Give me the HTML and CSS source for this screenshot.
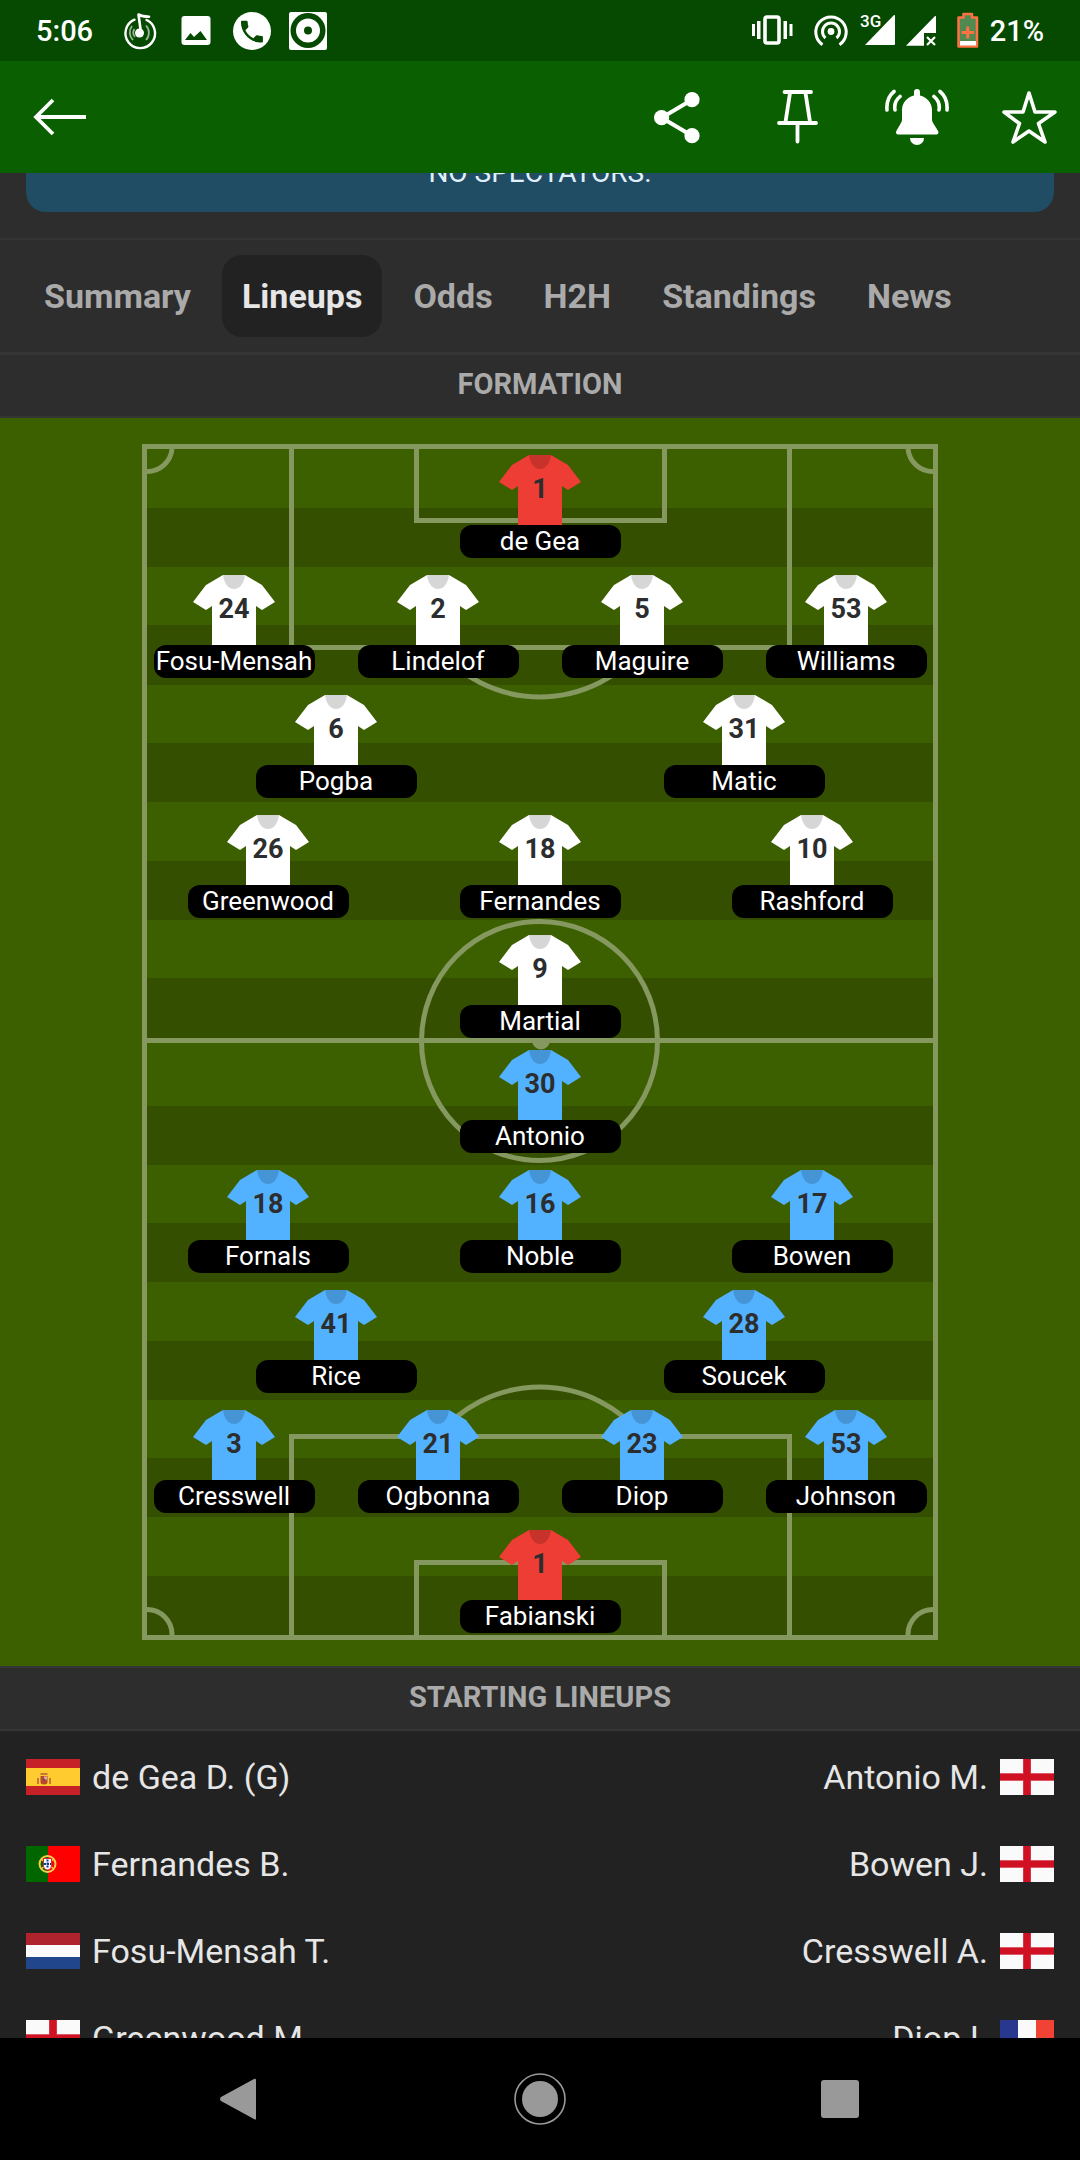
FILE: index.html
```html
<!DOCTYPE html>
<html lang="en">
<head>
<meta charset="utf-8">
<meta name="viewport" content="width=device-width, initial-scale=1">
<title>Lineups</title>
<link rel="stylesheet" href="styles.css">
</head>
<body>
<svg class="defs" aria-hidden="true">
  <symbol id="jersey" viewBox="0 0 82 70">
    <path fill="currentColor" d="M30 0H52L69 10L82 27L69 35L63 31V70H19V31L13 35L0 27L13 10Z"/>
    <path fill="#000" fill-opacity=".16" d="M30 0H52C51 8 47 14 41 14S31 8 30 0Z"/>
  </symbol>
  <symbol id="england" viewBox="0 0 54 36">
    <path fill="#fafafa" d="M0 0H54V36H0Z"/>
    <path fill="#dd5a69" d="M23 0H31V36H23ZM0 14H54V22H0Z"/>
    <path fill="#d01124" d="M23.500 0H30.500V36H23.500ZM0 15H54V21H0Z"/>
  </symbol>
  <symbol id="spain" viewBox="0 0 54 36">
    <path fill="#c62127" d="M0 0H54V36H0Z"/>
    <path fill="#ffcb2f" d="M0 9H54V27H0Z"/>
    <path fill="#c8763a" d="M11 19h2v6h-2zM23 19h2v6h-2zM14.500 14h7v2h-7z"/>
    <path fill="#b84a2a" d="M14.500 17h7v6a3.500 2.500 0 0 1-7 0z"/>
    <path fill="#d9b5b0" d="M18 17.500h3v3h-3z"/>
    <path fill="#7a4a6a" d="M17 19.500h2v2.500h-2z"/>
  </symbol>
  <symbol id="portugal" viewBox="0 0 54 36">
    <path fill="#f00" d="M0 0H54V36H0Z"/>
    <path fill="#060" d="M0 0H22V36H0Z"/>
    <circle cx="21.500" cy="18" r="8" fill="none" stroke="#f5cf4a" stroke-width="2"/>
    <path stroke="#f5cf4a" stroke-width="1.500" d="M15 13L28 23M15 23L28 13"/>
    <path fill="#fff" stroke="#d22" d="M17.500 12.500h8v7a4 4.500 0 0 1-8 0z"/>
    <path stroke="#0a3a9a" stroke-width="2" stroke-dasharray="2 1" d="M21.500 13.500V22M18 18H25"/>
  </symbol>
  <symbol id="netherlands" viewBox="0 0 54 36">
    <path fill="#ae232d" d="M0 0H54V12H0Z"/>
    <path fill="#fafafa" d="M0 12H54V24H0Z"/>
    <path fill="#21468b" d="M0 24H54V36H0Z"/>
  </symbol>
  <symbol id="france" viewBox="0 0 54 36">
    <path fill="#28388f" d="M0 0H18V36H0Z"/>
    <path fill="#fafafa" d="M18 0H36V36H18Z"/>
    <path fill="#f04336" d="M36 0H54V36H36Z"/>
  </symbol>
</svg>

<div class="status">
  <span class="time">5:06</span>
  <div class="status-left">
    <svg width="38" height="38" viewBox="0 0 38 38" fill="none" stroke="#fff">
      <path stroke-width="2.400" stroke-linecap="round" d="M13.500 7.700A14.800 14.800 0 1 0 25.500 7.900"/>
      <path stroke-width="2.600" stroke-linejoin="round" stroke-linecap="round" d="M20 21L17.500 2.500Q21 4.500 28 4.700"/>
      <circle cx="18.500" cy="21" r="4.500" fill="#fff" stroke="none"/>
      <path stroke-opacity=".6" stroke-width="1.800" d="M11 14A10.500 10.500 0 0 0 12 28M13.500 17A6.500 6.500 0 0 0 14 25M25 13.500A10.500 10.500 0 0 1 25 28"/>
    </svg>
    <svg width="38" height="38" viewBox="0 0 38 38">
      <rect x="4.500" y="4" width="29" height="29" rx="3" fill="#fff"/>
      <path class="cut" d="M8 28L13.500 21L17 25L23.500 19L30 28Z"/>
    </svg>
    <svg width="38" height="38" viewBox="0 0 38 38">
      <circle cx="19" cy="19" r="19" fill="#fff"/>
      <path class="cut" transform="translate(4.300 5) scale(1.220)" d="M6.620 10.790c1.440 2.830 3.760 5.140 6.590 6.590l2.200-2.200c.27-.27.67-.36 1.020-.24 1.120.37 2.330.57 3.570.57.55 0 1 .45 1 1V20c0 .55-.45 1-1 1-9.390 0-17-7.610-17-17 0-.55.45-1 1-1h3.500c.55 0 1 .45 1 1 0 1.250.2 2.450.57 3.570.11.35.03.74-.25 1.020l-2.200 2.200z"/>
    </svg>
    <svg width="38" height="38" viewBox="0 0 38 38">
      <rect width="38" height="38" rx="2" fill="#fff"/>
      <circle class="cut" cx="19" cy="18.500" r="17.500"/>
      <circle cx="19" cy="18.500" r="12" fill="#fff"/>
      <circle class="cut" cx="19" cy="18.500" r="4"/>
    </svg>
  </div>
  <div class="status-right">
    <svg width="52" height="38" viewBox="0 0 52 38">
      <rect x="15" y="5" width="14" height="26" rx="2" fill="none" stroke="#fff" stroke-width="3.600"/>
      <path fill="#fff" d="M7 9h3.500v18H7zM2 12h3v12H2zM33.500 9H37v18h-3.500zM39.500 12h3v12h-3z"/>
    </svg>
    <svg width="38" height="38" viewBox="0 0 38 38" fill="none" stroke="#fff" stroke-width="3">
      <circle cx="19" cy="19.500" r="3.400" fill="#fff" stroke="none"/>
      <path d="M13.500 26A8.500 8.500 0 1 1 24.500 26M10.500 32.700A15.200 15.200 0 1 1 27.500 32.700"/>
    </svg>
    <svg width="36" height="38" viewBox="0 0 36 38">
      <path fill="#fff" d="M5 33L34 3Q35 2.500 35 4V32Q35 33 34 33Z"/>
      <text class="net" x="0" y="15">3G</text>
    </svg>
    <svg width="40" height="38" viewBox="0 0 40 38">
      <path fill="#fff" d="M0 33.700L29 4Q30 3.500 30 5V21H18V33.700Z"/>
      <path stroke="#fff" stroke-width="2.200" d="M21 25L29 33M29 25L21 33"/>
    </svg>
    <svg width="24" height="38" viewBox="0 0 24 38">
      <path fill="#508a50" stroke="#ff7043" stroke-width="2.500" stroke-linejoin="round" d="M2.500 5.500H7.500V2H16V5.500H21V34.500H2.500Z"/>
      <path fill="#fff" d="M4 29H20V33.500H4Z"/>
      <path stroke="#ff7043" stroke-width="3" d="M5.500 20.500H18M11.700 14.500V26.500"/>
    </svg>
    <span class="battery">21%</span>
  </div>
</div>

<header class="appbar">
  <button class="icon-btn back" type="button" aria-label="Back">
    <svg width="54" height="38" viewBox="0 0 54 38" fill="none" stroke="#fff" stroke-width="3.800">
      <path d="M53 19H3M20 2L3 19L20 36"/>
    </svg>
  </button>
  <button class="icon-btn" type="button" aria-label="Share">
    <svg width="64" height="56" viewBox="0 0 64 56" fill="#fff">
      <path fill="none" stroke="#fff" stroke-width="4" d="M40 10.700L9.600 28.700L40 46.700"/>
      <circle cx="9.600" cy="28.700" r="7.600"/><circle cx="40" cy="10.700" r="7.600"/><circle cx="40" cy="46.700" r="7.600"/>
    </svg>
  </button>
  <button class="icon-btn" type="button" aria-label="Pin">
    <svg width="64" height="56" viewBox="0 0 64 56" fill="none" stroke="#fff" stroke-width="3.800" stroke-linecap="round">
      <path d="M16.500 3H43M22 4L17.500 33M37.500 4L42 33M11 34H48M29.500 34V52.500"/>
    </svg>
  </button>
  <button class="icon-btn" type="button" aria-label="Notifications">
    <svg width="66" height="56" viewBox="0 0 66 56" fill="#fff">
      <path d="M30 3a3 3 0 0 1 6 0V6.500C43 8 48 14 48 21V31C48 34 54.500 41 54.500 43.500Q54.500 45.500 52.500 45.500H14Q12 45.500 12 43.500C12 41 18 34 18 31V21C18 14 23 8 30 6.500Z"/>
      <path d="M26 49H40A7 7 0 0 1 26 49Z"/>
      <path fill="none" stroke="#fff" stroke-width="3.600" stroke-linecap="round" d="M10 2.500Q2 9 3 21M16 7.500Q9.500 13 11 21M56 2.500Q64 9 63 21M50 7.500Q56.500 13 55 21"/>
    </svg>
  </button>
  <button class="icon-btn" type="button" aria-label="Favourite">
    <svg width="58" height="56" viewBox="1 0 58 56" fill="none" stroke="#fff" stroke-width="3.600" stroke-linejoin="round">
      <path d="M28 4L34 23H54L37.500 34.500L44 53L28 42L12 53L18.500 34.500L3 23H22Z"/>
    </svg>
  </button>
</header>

<main class="content">
  <div class="notice-wrap"><p class="notice">NO SPECTATORS.</p></div>

  <nav class="tabs" aria-label="Match sections">
    <button type="button" class="tab">Summary</button>
    <button type="button" class="tab active" aria-current="page">Lineups</button>
    <button type="button" class="tab">Odds</button>
    <button type="button" class="tab">H2H</button>
    <button type="button" class="tab">Standings</button>
    <button type="button" class="tab">News</button>
  </nav>

  <h2 class="heading">FORMATION</h2>
  <section class="pitch" aria-label="Formation">
    <svg class="field" viewBox="142 444 796 1196" aria-hidden="true">
      <path fill="#344f00" d="M147 508H933V567H147ZM147 625H933V685H147ZM147 743H933V802H147ZM147 861H933V920H147ZM147 978H933V1040H147ZM147 1106H933V1165H147ZM147 1223H933V1282H147ZM147 1341H933V1400H147ZM147 1458H933V1517H147ZM147 1576H933V1637H147Z"/>
      <g fill="none" stroke="#84985f" stroke-width="5">
        <path d="M144.500 446.500H935.500V1637.500H144.500ZM147 1040.500H933"/>
        <path d="M291.500 449V647.500H789.500V449M416.500 449V520.500H664.500V449M437 647.500A132 132 0 0 0 643 647.500"/>
        <path d="M291.500 1635V1436.500H789.500V1635M416.500 1635V1562.500H664.500V1635M437 1436.500A132 132 0 0 1 643 1436.500"/>
        <ellipse cx="539.500" cy="1041" rx="118" ry="119.500"/>
        <path d="M172 449A25 25 0 0 1 147 471.500M908 449A25 25 0 0 0 933 471.500M172 1635A25 25 0 0 0 147 1609.500M908 1635A25 25 0 0 1 933 1609.500"/>
      </g>
      <circle cx="541" cy="1040.500" r="9" fill="#84985f"/>
    </svg>
    <div class="teams">
      <div class="team home">
        <ul class="line">
          <li class="player keeper"><div class="shirt"><svg><use href="#jersey"/></svg><b>1</b></div><span class="name">de Gea</span></li>
        </ul>
        <ul class="line">
          <li class="player"><div class="shirt"><svg><use href="#jersey"/></svg><b>24</b></div><span class="name">Fosu-Mensah</span></li>
          <li class="player"><div class="shirt"><svg><use href="#jersey"/></svg><b>2</b></div><span class="name">Lindelof</span></li>
          <li class="player"><div class="shirt"><svg><use href="#jersey"/></svg><b>5</b></div><span class="name">Maguire</span></li>
          <li class="player"><div class="shirt"><svg><use href="#jersey"/></svg><b>53</b></div><span class="name">Williams</span></li>
        </ul>
        <ul class="line">
          <li class="player"><div class="shirt"><svg><use href="#jersey"/></svg><b>6</b></div><span class="name">Pogba</span></li>
          <li class="player"><div class="shirt"><svg><use href="#jersey"/></svg><b>31</b></div><span class="name">Matic</span></li>
        </ul>
        <ul class="line">
          <li class="player"><div class="shirt"><svg><use href="#jersey"/></svg><b>26</b></div><span class="name">Greenwood</span></li>
          <li class="player"><div class="shirt"><svg><use href="#jersey"/></svg><b>18</b></div><span class="name">Fernandes</span></li>
          <li class="player"><div class="shirt"><svg><use href="#jersey"/></svg><b>10</b></div><span class="name">Rashford</span></li>
        </ul>
        <ul class="line">
          <li class="player"><div class="shirt"><svg><use href="#jersey"/></svg><b>9</b></div><span class="name">Martial</span></li>
        </ul>
      </div>
      <div class="team away">
        <ul class="line">
          <li class="player"><div class="shirt"><svg><use href="#jersey"/></svg><b>30</b></div><span class="name">Antonio</span></li>
        </ul>
        <ul class="line">
          <li class="player"><div class="shirt"><svg><use href="#jersey"/></svg><b>18</b></div><span class="name">Fornals</span></li>
          <li class="player"><div class="shirt"><svg><use href="#jersey"/></svg><b>16</b></div><span class="name">Noble</span></li>
          <li class="player"><div class="shirt"><svg><use href="#jersey"/></svg><b>17</b></div><span class="name">Bowen</span></li>
        </ul>
        <ul class="line">
          <li class="player"><div class="shirt"><svg><use href="#jersey"/></svg><b>41</b></div><span class="name">Rice</span></li>
          <li class="player"><div class="shirt"><svg><use href="#jersey"/></svg><b>28</b></div><span class="name">Soucek</span></li>
        </ul>
        <ul class="line">
          <li class="player"><div class="shirt"><svg><use href="#jersey"/></svg><b>3</b></div><span class="name">Cresswell</span></li>
          <li class="player"><div class="shirt"><svg><use href="#jersey"/></svg><b>21</b></div><span class="name">Ogbonna</span></li>
          <li class="player"><div class="shirt"><svg><use href="#jersey"/></svg><b>23</b></div><span class="name">Diop</span></li>
          <li class="player"><div class="shirt"><svg><use href="#jersey"/></svg><b>53</b></div><span class="name">Johnson</span></li>
        </ul>
        <ul class="line">
          <li class="player keeper"><div class="shirt"><svg><use href="#jersey"/></svg><b>1</b></div><span class="name">Fabianski</span></li>
        </ul>
      </div>
    </div>
  </section>

  <h2 class="heading bordered">STARTING LINEUPS</h2>
  <ul class="lineups">
    <li class="pair"><svg class="flag"><use href="#spain"/></svg><span class="left">de Gea D. (G)</span><span>Antonio M.</span><svg class="flag"><use href="#england"/></svg></li>
    <li class="pair"><svg class="flag"><use href="#portugal"/></svg><span class="left">Fernandes B.</span><span>Bowen J.</span><svg class="flag"><use href="#england"/></svg></li>
    <li class="pair"><svg class="flag"><use href="#netherlands"/></svg><span class="left">Fosu-Mensah T.</span><span>Cresswell A.</span><svg class="flag"><use href="#england"/></svg></li>
    <li class="pair"><svg class="flag"><use href="#england"/></svg><span class="left">Greenwood M.</span><span>Diop I.</span><svg class="flag"><use href="#france"/></svg></li>
  </ul>
</main>

<footer class="sysnav">
  <button class="icon-btn" type="button" aria-label="System back">
    <svg width="52" height="52" viewBox="0 0 52 52" fill="#999"><path d="M42 6Q44 5 44 7V45Q44 48 42 46L9 28Q7 26 9 24Z"/></svg>
  </button>
  <button class="icon-btn" type="button" aria-label="Home">
    <svg width="52" height="52" viewBox="0 0 52 52" fill="#999"><circle cx="26" cy="26" r="18"/><circle cx="26" cy="26" r="25" fill="none" stroke="#999" stroke-width="1.600"/></svg>
  </button>
  <button class="icon-btn" type="button" aria-label="Recent apps">
    <svg width="52" height="52" viewBox="0 0 52 52" fill="#999"><rect x="5" y="7" width="38" height="38" rx="3"/></svg>
  </button>
</footer>
</body>
</html>
```

FILE: styles.css
```css
* {
  box-sizing: border-box;
}

body {
  margin: 0;
  height: 100vh;
  display: flex;
  flex-direction: column;
  overflow: hidden;
  background: #222;
  color: #e6e6e6;
  font-family: Roboto, "Liberation Sans", sans-serif;
}

ul {
  margin: 0;
  padding: 0;
  list-style: none;
}

svg {
  display: block;
  flex: none;
}

.defs {
  width: 0;
  height: 0;
}

/* Status bar */
.status {
  display: flex;
  align-items: center;
  flex: none;
  padding: 12px 36px 11px;
  background: #054a00;
  color: #fff;
  font-size: 29px;
  line-height: 38px;
  font-weight: 500;
}

.time {
  width: 85px;
}

.status-left {
  display: flex;
  gap: 18px;
}

.status-right {
  display: flex;
  gap: 10px;
  margin-left: auto;
}

.cut {
  fill: #054a00;
}

.net {
  fill: #fff;
  stroke: #054a00;
  stroke-width: 2px;
  paint-order: stroke;
  font-size: 17px;
  font-weight: 500;
}

/* App bar */
.appbar {
  display: flex;
  align-items: center;
  gap: 52px;
  flex: none;
  padding: 28px 20px 28px 33px;
  background: #0a6000;
}

.icon-btn {
  display: flex;
  padding: 0;
  border: 0;
  background: none;
}

.back {
  margin-right: auto;
}

.content {
  flex: 1;
  min-height: 0;
  overflow: hidden;
}

.notice-wrap {
  padding: 0 26px 26px;
  background: #2d2d2d;
}

.notice {
  margin: -18px 0 0;
  padding-bottom: 21px;
  border-radius: 0 0 20px 20px;
  background: #214d64;
  color: #e0f0fa;
  font-size: 28px;
  line-height: 36px;
  text-align: center;
}

.tabs {
  display: flex;
  gap: 11px;
  padding: 15px 24px;
  border-top: 2px solid #333;
  border-bottom: 3px solid #353535;
  background: #2d2d2d;
}

.tab {
  height: 82px;
  padding: 0 20px;
  border: 0;
  border-radius: 20px;
  background: none;
  color: #aaa;
  font: 700 34px/82px Roboto, "Liberation Sans", sans-serif;
}

.tab.active {
  background: #222;
  color: #e6e6e6;
}

.heading {
  margin: 0;
  padding-bottom: 2px;
  border-bottom: 2px solid #353535;
  background: #2d2d2d;
  color: #aaa;
  font-size: 29px;
  line-height: 59px;
  font-weight: 700;
  text-align: center;
}

.bordered {
  border-top: 2px solid #353535;
}

/* Pitch: drawing and players share one grid cell */
.pitch {
  display: grid;
  justify-items: center;
  padding: 26px 0;
  background: #3c5f00;
}

.field,
.teams {
  grid-area: 1 / 1;
  width: 100%;
}

.field {
  max-width: 796px;
}

.teams {
  display: grid;
  gap: 12px;
  align-content: start;
  max-width: 816px;
  padding-top: 11px;
}

.team {
  display: grid;
  gap: 17px;
}

.line {
  display: flex;
}

.player {
  flex: 1;
  display: flex;
  flex-direction: column;
  align-items: center;
}

.shirt {
  display: grid;
  place-items: center;
  width: 82px;
  height: 70px;
  color: #fff;
}

.shirt svg,
.shirt b {
  grid-area: 1 / 1;
}

.shirt svg {
  width: 82px;
  height: 70px;
}

.shirt b {
  padding-bottom: 2px;
  color: #2b2d2f;
  font-size: 27px;
  line-height: 30px;
}

.away .shirt {
  color: #53b2ff;
}

.team .keeper .shirt {
  color: #ee3d34;
}

.name {
  width: 161px;
  border-radius: 12px;
  background: #000;
  color: #fff;
  font-size: 26px;
  line-height: 33px;
  text-align: center;
  white-space: nowrap;
}

/* Starting lineups */
.lineups {
  padding: 2px 26px;
}

.pair {
  display: flex;
  align-items: center;
  gap: 12px;
  height: 87px;
  font-size: 34px;
  line-height: 40px;
}

.pair .left {
  margin-right: auto;
}

.flag {
  width: 54px;
  height: 36px;
}

/* System navigation */
.sysnav {
  display: grid;
  grid-template-columns: repeat(3, 1fr);
  justify-items: center;
  flex: none;
  padding: 35px 8%;
  background: #000;
}
```
